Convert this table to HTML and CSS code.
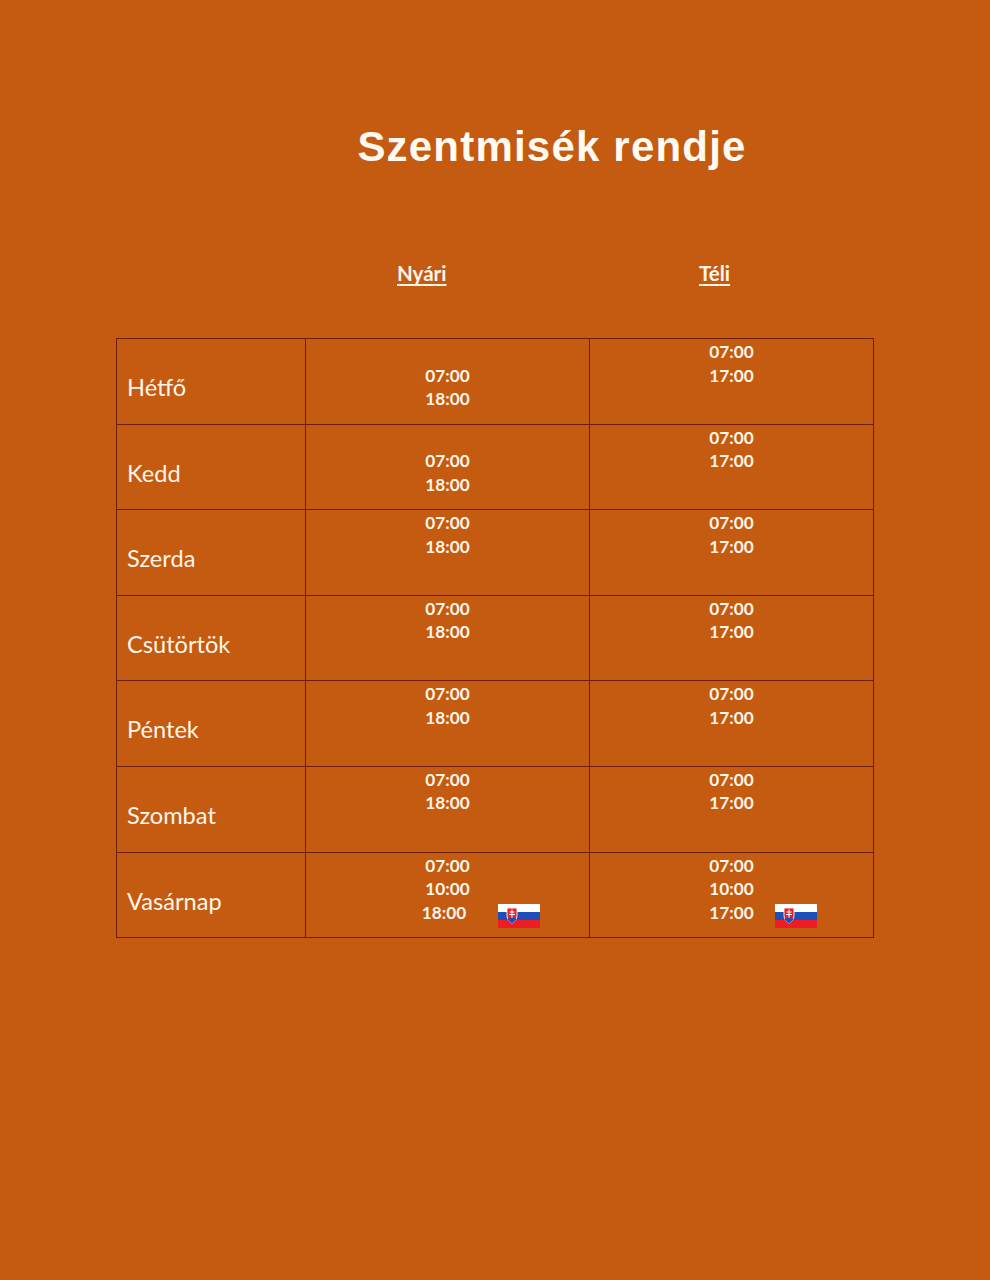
FILE: index.html
```html
<!DOCTYPE html>
<html lang="hu">
<head>
<meta charset="utf-8">
<title>Szentmisék rendje</title>
<link rel="stylesheet" href="styles.css">
</head>
<body>
<main class="page">
  <h1 class="title">Szentmisék rendje</h1>
  <div class="season-heads">
    <span class="season nyari">Nyári</span>
    <span class="season teli">Téli</span>
  </div>
  <table class="schedule">
    <colgroup>
      <col class="c-day"><col class="c-time"><col class="c-time">
    </colgroup>
    <tbody>
      <tr>
        <td class="day">Hétfő</td>
        <td class="times"><div class="ln">&nbsp;</div><div class="ln">07:00</div><div class="ln">18:00</div></td>
        <td class="times"><div class="ln">07:00</div><div class="ln">17:00</div></td>
      </tr>
      <tr>
        <td class="day">Kedd</td>
        <td class="times"><div class="ln">&nbsp;</div><div class="ln">07:00</div><div class="ln">18:00</div></td>
        <td class="times"><div class="ln">07:00</div><div class="ln">17:00</div></td>
      </tr>
      <tr>
        <td class="day">Szerda</td>
        <td class="times"><div class="ln">07:00</div><div class="ln">18:00</div></td>
        <td class="times"><div class="ln">07:00</div><div class="ln">17:00</div></td>
      </tr>
      <tr>
        <td class="day">Csütörtök</td>
        <td class="times"><div class="ln">07:00</div><div class="ln">18:00</div></td>
        <td class="times"><div class="ln">07:00</div><div class="ln">17:00</div></td>
      </tr>
      <tr>
        <td class="day">Péntek</td>
        <td class="times"><div class="ln">07:00</div><div class="ln">18:00</div></td>
        <td class="times"><div class="ln">07:00</div><div class="ln">17:00</div></td>
      </tr>
      <tr>
        <td class="day">Szombat</td>
        <td class="times"><div class="ln">07:00</div><div class="ln">18:00</div></td>
        <td class="times"><div class="ln">07:00</div><div class="ln">17:00</div></td>
      </tr>
      <tr>
        <td class="day">Vasárnap</td>
        <td class="times sunday">
          <div class="ln">07:00</div><div class="ln">10:00</div><div class="ln shift">18:00</div>
          <svg class="flag flag-n" viewBox="0 0 42 24" aria-label="SK">
            <rect x="0" y="0" width="42" height="8" fill="#ffffff"/>
            <rect x="0" y="8" width="42" height="8" fill="#1d4fb8"/>
            <rect x="0" y="16" width="42" height="8" fill="#ee1c25"/>
            <path d="M9 4 h10 v7.5 c0 4 -2.5 6.2 -5 7.7 c-2.5 -1.5 -5 -3.7 -5 -7.7 z" fill="#ee1c25" stroke="#ffffff" stroke-width="0.9"/>
            <path d="M13.5 5.6 h1 v2 h2 v1 h-2 v1.5 h2.5 v1 h-2.5 v3 h-1 v-3 h-2.5 v-1 h2.5 v-1.5 h-2 v-1 h2 z" fill="#ffffff"/>
            <path d="M9.6 15 c1.2 -1.6 2.6 -1.6 3.2 -0.4 c0.6 -1.4 2 -1.4 2.4 0 c0.8 -1.2 2.2 -1.2 3.2 0.4 c-1 2 -2.6 3.2 -4.4 4.2 c-1.8 -1 -3.4 -2.2 -4.4 -4.2 z" fill="#1d4fb8"/>
          </svg>
        </td>
        <td class="times sunday">
          <div class="ln">07:00</div><div class="ln">10:00</div><div class="ln">17:00</div>
          <svg class="flag flag-t" viewBox="0 0 42 24" aria-label="SK">
            <rect x="0" y="0" width="42" height="8" fill="#ffffff"/>
            <rect x="0" y="8" width="42" height="8" fill="#1d4fb8"/>
            <rect x="0" y="16" width="42" height="8" fill="#ee1c25"/>
            <path d="M9 4 h10 v7.5 c0 4 -2.5 6.2 -5 7.7 c-2.5 -1.5 -5 -3.7 -5 -7.7 z" fill="#ee1c25" stroke="#ffffff" stroke-width="0.9"/>
            <path d="M13.5 5.6 h1 v2 h2 v1 h-2 v1.5 h2.5 v1 h-2.5 v3 h-1 v-3 h-2.5 v-1 h2.5 v-1.5 h-2 v-1 h2 z" fill="#ffffff"/>
            <path d="M9.6 15 c1.2 -1.6 2.6 -1.6 3.2 -0.4 c0.6 -1.4 2 -1.4 2.4 0 c0.8 -1.2 2.2 -1.2 3.2 0.4 c-1 2 -2.6 3.2 -4.4 4.2 c-1.8 -1 -3.4 -2.2 -4.4 -4.2 z" fill="#1d4fb8"/>
          </svg>
        </td>
      </tr>
    </tbody>
  </table>
</main>
</body>
</html>
```

FILE: styles.css
```css
html, body {
  margin: 0;
  padding: 0;
  background: #c55a11;
}

body {
  width: 990px;
  min-height: 1280px;
  color: #fff6ea;
  font-family: Lato, "Open Sans", "DejaVu Sans", sans-serif;
}

.page {
  display: flex;
  flex-direction: column;
  padding-top: 122px;
}

.title {
  margin: 0;
  padding-left: 114px;
  text-align: center;
  font-family: "Liberation Sans", Arial, sans-serif;
  font-weight: bold;
  font-size: 42px;
  line-height: 50px;
  letter-spacing: 1.2px;
  color: #fffaf2;
}

.season-heads {
  display: flex;
  margin-top: 89px;
  padding-left: 397px;
  font-weight: bold;
  font-size: 20.5px;
  line-height: 24px;
}

.season {
  text-decoration: underline;
  text-decoration-thickness: 2px;
  text-underline-offset: 3px;
}

.nyari {
  width: 302px;
}

.schedule {
  margin-top: 53px;
  margin-left: 116px;
  width: 757px;
  border-collapse: collapse;
  table-layout: fixed;
}

.c-day { width: 189px; }
.c-time { width: 284px; }

.schedule td {
  border: 1px solid #6e1d08;
  height: 85.6px;
  padding: 0;
  vertical-align: top;
  box-sizing: border-box;
}

.schedule td.day {
  padding: 34px 0 0 10px;
  font-size: 23.6px;
  line-height: 28px;
}

.schedule td.times {
  padding-top: 1px;
  text-align: center;
  font-weight: bold;
  font-size: 17.2px;
}

.ln {
  line-height: 23.5px;
}

.shift {
  margin-right: 7px;
}

.sunday {
  position: relative;
}

.flag {
  position: absolute;
  top: 51px;
  width: 42px;
  height: 24px;
  display: block;
}

.flag-n { left: 192px; }
.flag-t { left: 185px; }
```
